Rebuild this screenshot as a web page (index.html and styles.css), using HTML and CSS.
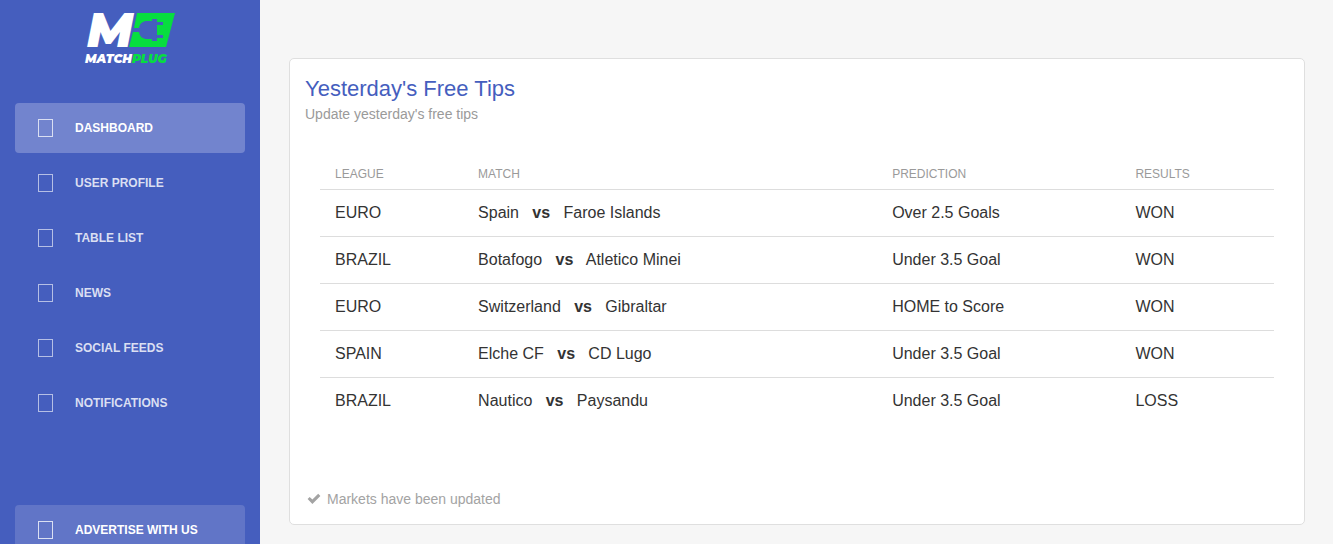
FILE: index.html
```html
<!DOCTYPE html>
<html lang="en">
<head>
    <meta charset="UTF-8">
    <meta name="viewport" content="width=device-width, initial-scale=1.0">
    <title>MatchPlug</title>
    <link rel="stylesheet" href="styles.css">
</head>
<body>

<div class="wrapper">
    <div class="sidebar">
        <a href="#" class="logo">
            <svg width="92" height="68" viewBox="0 -11 92 68">
                <text class="logo-m" x="3" y="36">M</text>
                <path fill="#07dd3f" d="M53 2H91L82 36H45L49 21H55C56 26 59 28 63 28H68V30H73V27H79V24H73V14H79V11H73V8H68V10H63C59 10 56 12 55 17H50Z"/>
                <text class="logo-name" x="1" y="52">MATCH<tspan class="logo-green">PLUG</tspan></text>
            </svg>
        </a>
        <ul class="nav">
            <li class="active"><a href="#"><i class="icon"></i>Dashboard</a></li>
            <li><a href="#"><i class="icon"></i>User Profile</a></li>
            <li><a href="#"><i class="icon"></i>Table List</a></li>
            <li><a href="#"><i class="icon"></i>News</a></li>
            <li><a href="#"><i class="icon"></i>Social Feeds</a></li>
            <li><a href="#"><i class="icon"></i>Notifications</a></li>
            <li class="active-pro"><a href="#"><i class="icon"></i>Advertise with us</a></li>
        </ul>
    </div>

    <div class="main-panel">
        <div class="card">
            <div class="header">
                <h4 class="title">Yesterday's Free Tips</h4>
                <p class="category">Update yesterday's free tips</p>
            </div>
            <div class="content">
                <table class="table">
                    <thead>
                        <tr>
                            <th class="col-league">League</th>
                            <th class="col-match">Match</th>
                            <th class="col-prediction">Prediction</th>
                            <th>Results</th>
                        </tr>
                    </thead>
                    <tbody>
                        <tr>
                            <td>EURO</td>
                            <td>Spain &nbsp; <b>vs</b> &nbsp; Faroe Islands</td>
                            <td>Over 2.5 Goals</td>
                            <td>WON</td>
                        </tr>
                        <tr>
                            <td>BRAZIL</td>
                            <td>Botafogo &nbsp; <b>vs</b> &nbsp; Atletico Minei</td>
                            <td>Under 3.5 Goal</td>
                            <td>WON</td>
                        </tr>
                        <tr>
                            <td>EURO</td>
                            <td>Switzerland &nbsp; <b>vs</b> &nbsp; Gibraltar</td>
                            <td>HOME to Score</td>
                            <td>WON</td>
                        </tr>
                        <tr>
                            <td>SPAIN</td>
                            <td>Elche CF &nbsp; <b>vs</b> &nbsp; CD Lugo</td>
                            <td>Under 3.5 Goal</td>
                            <td>WON</td>
                        </tr>
                        <tr>
                            <td>BRAZIL</td>
                            <td>Nautico &nbsp; <b>vs</b> &nbsp; Paysandu</td>
                            <td>Under 3.5 Goal</td>
                            <td>LOSS</td>
                        </tr>
                    </tbody>
                </table>
            </div>
            <div class="stats">
                <svg width="14" height="12" viewBox="0 0 14 12">
                    <path fill="#a3a3a3" d="M0.6 6L2.7 3.9L5.4 6.6L11.2 0.8L13.4 3L5.4 11Z"/>
                </svg>
                Markets have been updated
            </div>
        </div>
    </div>
</div>

</body>
</html>
```
FILE: styles.css
```css
* {
    box-sizing: border-box;
}
body {
    margin: 0;
    font-family: "Liberation Sans", Arial, sans-serif;
    font-size: 14px;
    color: #333;
    background: #f6f6f6;
}
.wrapper {
    display: flex;
    height: 100vh;
    overflow: hidden;
}

/* Sidebar */
.sidebar {
    flex: 0 0 260px;
    padding: 0 15px;
    background: #455ebe;
    overflow: hidden;
}
.logo {
    display: block;
    height: 103px;
    padding-left: 69px;
}
.logo svg {
    display: block;
}
.logo-m {
    font: italic 900 48px Montserrat, Inter, sans-serif;
    fill: #fff;
}
.logo-name {
    font: italic 900 12px Montserrat, Inter, sans-serif;
    fill: #fff;
}
.logo-green {
    fill: #07dd3f;
}
.nav {
    margin: 0;
    padding: 0;
    list-style: none;
}
.nav li {
    margin-bottom: 5px;
}
.nav a {
    display: flex;
    align-items: center;
    height: 50px;
    padding-left: 23px;
    border-radius: 4px;
    font-size: 12px;
    font-weight: bold;
    text-transform: uppercase;
    text-decoration: none;
    color: #dadff2;
}
.nav .icon {
    width: 15px;
    height: 18px;
    margin-right: 22px;
    border: 1px solid #b5bfe5;
}
.nav .active a {
    color: #fff;
    background: #7284ce;
}
.nav .active-pro {
    margin-top: 77px;
}
.nav .active-pro a {
    color: #fff;
    background: #6175c7;
}
.nav .active .icon,
.nav .active-pro .icon {
    border-color: #dadff2;
}

/* Card */
.main-panel {
    flex: 1;
    padding: 58px 28px 0 29px;
}
.card {
    background: #fff;
    border: 1px solid #dfdfdf;
    border-radius: 5px;
}
.header {
    padding: 16px 15px 0;
}
.title {
    margin: 0;
    font-size: 22px;
    font-weight: normal;
    line-height: 28px;
    color: #455ebe;
}
.category {
    margin: 0;
    line-height: 22px;
    color: #9a9a9a;
}
.content {
    padding: 35px 30px 0;
}
.table {
    width: 100%;
    border-collapse: collapse;
    table-layout: fixed;
}
.table th {
    height: 29px;
    padding: 0 15px;
    font-size: 12px;
    font-weight: normal;
    text-align: left;
    text-transform: uppercase;
    color: #9a9a9a;
}
.table td {
    height: 47px;
    padding: 0 15px;
    font-size: 16px;
    border-top: 1px solid #ddd;
}
.col-league {
    width: 15%;
}
.col-match {
    width: 43.4%;
}
.col-prediction {
    width: 25.5%;
}
.stats {
    display: flex;
    align-items: center;
    gap: 6px;
    padding: 66px 17px 16px;
    line-height: 18px;
    color: #a3a3a3;
}
```
